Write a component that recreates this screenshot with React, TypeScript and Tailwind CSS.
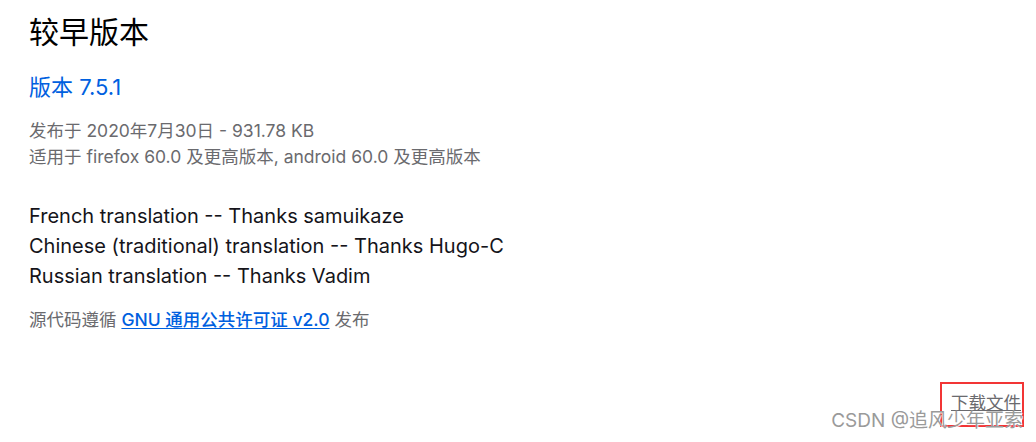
const translations = [
  "French translation -- Thanks samuikaze",
  "Chinese (traditional) translation -- Thanks Hugo-C",
  "Russian translation -- Thanks Vadim",
];

export default function App() {
  return (
    <div
      className="relative h-[442px] w-[1036px] overflow-hidden bg-white text-[#0c0c0d]"
      style={{ fontFamily: 'Inter, "Noto Sans CJK SC", sans-serif' }}
    >
      <div className="px-[29px] pt-[11px]">
        <h2 className="text-[30px] leading-[42px] font-normal text-black">较早版本</h2>

        <h3 className="mt-[19px] text-[22px] leading-[30px] font-normal text-[#0060df]">版本 7.5.1</h3>

        <div className="mt-[16px] text-[17.5px] leading-[26px] text-[#6a6a6e]">
          <p>发布于 2020年7月30日 - 931.78 KB</p>
          <p>适用于 firefox 60.0 及更高版本, android 60.0 及更高版本</p>
        </div>

        <div className="mt-[31px] text-[20px] leading-[30px] text-[#15141a]">
          {translations.map((t) => (
            <p key={t}>{t}</p>
          ))}
        </div>

        <p className="mt-[16px] text-[17.5px] leading-[26px] text-[#6a6a6e]">
          源代码遵循{" "}
          <a href="#" className="font-medium text-[#0060df] underline underline-offset-2">
            GNU 通用公共许可证 v2.0
          </a>{" "}
          发布
        </p>
      </div>

      <div className="absolute right-[12px] top-[382px] flex h-[45px] w-[84px] items-start justify-end border-2 border-[#f23535] pr-[1px] pt-[9px]">
        <a href="#" className="text-[17.5px] leading-[20px] text-[#6a6a6e] underline underline-offset-1">
          下载文件
        </a>
      </div>

      <div
        className="pointer-events-none absolute right-[13px] top-[409px] text-[19px] leading-[24px] text-[#9a9a9a]"
        style={{ textShadow: "1px 1px 1px #fff" }}
      >
        CSDN @追风少年亚索
      </div>
    </div>
  );
}
